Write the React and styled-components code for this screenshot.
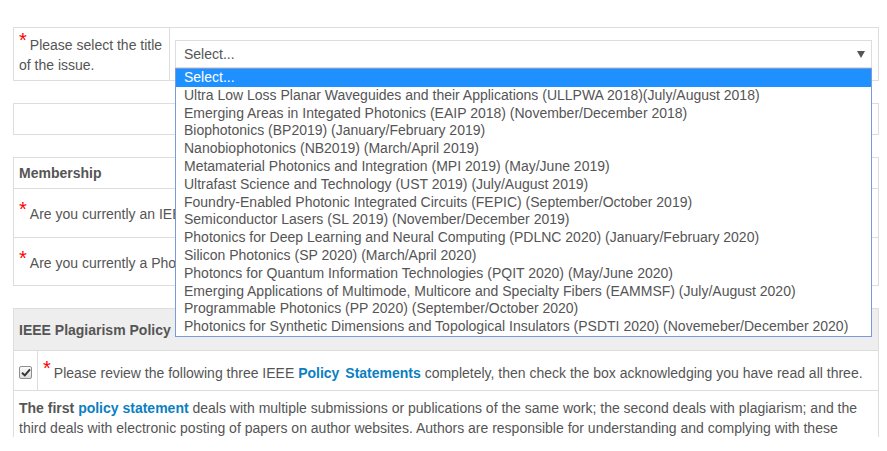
import React from "react";
import styled, { createGlobalStyle } from "styled-components";

const GlobalStyle = createGlobalStyle`
  html, body { margin: 0; padding: 0; background: #fff; }
  body {
    font-family: "Liberation Sans", Arial, sans-serif;
    font-size: 14px;
    color: #555;
  }
  * { box-sizing: border-box; }
`;

const Page = styled.div`
  width: 887px;
  height: 437px;
  overflow: hidden;
  padding: 27px 8px 0 13px;
  display: flex;
  flex-direction: column;
  gap: 22px;
`;

const Panel = styled.div`
  border: 1px solid #ddd;
  display: flex;
  flex-direction: column;
  flex-shrink: 0;
`;

const Row = styled.div`
  display: grid;
  grid-template-columns: ${(p) => p.$cols || "1fr"};
  border-top: ${(p) => (p.$first ? "none" : "1px solid #ddd")};
  background: ${(p) => (p.$shaded ? "#eee" : "#fff")};
  min-height: ${(p) => p.$h || 0}px;
`;

const Cell = styled.div`
  display: flex;
  align-items: center;
  padding: ${(p) => p.$pad || "5px"};
  line-height: 20px;
  border-right: ${(p) => (p.$divider ? "1px solid #ddd" : "none")};
`;

const Label = styled.div`
  line-height: 20px;
  padding-top: ${(p) => p.$drop || 2}px;
`;

const Req = styled.span`
  color: #f00;
  font-size: 20px;
  line-height: 10px;
  vertical-align: 3px;
  margin-right: 3px;
`;

const Heading = styled.div`
  font-weight: bold;
  color: #555;
`;

const SelectWrap = styled.div`
  position: relative;
  width: 697px;
`;

const SelectBox = styled.div`
  height: 28px;
  border: 1px solid #ddd;
  background: #fff;
  display: flex;
  align-items: center;
  justify-content: space-between;
  padding: 0 6px 0 8px;
  color: #555;
`;

const Caret = styled.span`
  width: 0;
  height: 0;
  border-left: 4px solid transparent;
  border-right: 4px solid transparent;
  border-top: 7px solid #555;
  margin-top: 1px;
`;

const OptionList = styled.ul`
  position: absolute;
  top: 28px;
  left: 0;
  width: 697px;
  margin: 0;
  padding: 0;
  list-style: none;
  background: #fff;
  border: 1px solid #7a9ad8;
  z-index: 10;
`;

const Option = styled.li`
  height: 17.8px;
  line-height: 17.8px;
  padding-left: 8px;
  white-space: nowrap;
  color: ${(p) => (p.$active ? "#fff" : "#555")};
  background: ${(p) => (p.$active ? "#1e90ff" : "transparent")};
`;

const Check = styled.span`
  display: inline-flex;
  align-items: center;
  justify-content: center;
  width: 13px;
  height: 13px;
  border: 1px solid #8f8f8f;
  border-radius: 2px;
  background: linear-gradient(#fbfbfb, #dcdcdc);
  margin-top: 4px;
`;

const Link = styled.a`
  color: #0b7fc1;
  font-weight: bold;
  text-decoration: none;
  word-spacing: ${(p) => (p.$wide ? "2px" : "normal")};
`;

const Strong = styled.b`
  color: #555;
`;

const Paragraph = styled.div`
  line-height: 20px;
  padding: 7px 5px 0 5px;
`;

const options = [
  "Select...",
  "Ultra Low Loss Planar Waveguides and their Applications (ULLPWA 2018)(July/August 2018)",
  "Emerging Areas in Integated Photonics (EAIP 2018) (November/December 2018)",
  "Biophotonics (BP2019) (January/February 2019)",
  "Nanobiophotonics (NB2019) (March/April 2019)",
  "Metamaterial Photonics and Integration (MPI 2019) (May/June 2019)",
  "Ultrafast Science and Technology (UST 2019) (July/August 2019)",
  "Foundry-Enabled Photonic Integrated Circuits (FEPIC) (September/October 2019)",
  "Semiconductor Lasers (SL 2019) (November/December 2019)",
  "Photonics for Deep Learning and Neural Computing (PDLNC 2020) (January/February 2020)",
  "Silicon Photonics (SP 2020) (March/April 2020)",
  "Photoncs for Quantum Information Technologies (PQIT 2020) (May/June 2020)",
  "Emerging Applications of Multimode, Multicore and Specialty Fibers (EAMMSF) (July/August 2020)",
  "Programmable Photonics (PP 2020) (September/October 2020)",
  "Photonics for Synthetic Dimensions and Topological Insulators (PSDTI 2020) (Novemeber/December 2020)",
];

export default function App() {
  return (
    <>
      <GlobalStyle />
      <Page>
        <Panel>
          <Row $first $cols="156px 1fr" $h={52}>
            <Cell $divider>
              <Label>
                <Req>*</Req>Please select the title of the issue.
              </Label>
            </Cell>
            <Cell $pad="0 6px 0 5px">
              <SelectWrap>
                <SelectBox>
                  <span>Select...</span>
                  <Caret />
                </SelectBox>
                <OptionList>
                  {options.map((o, i) => (
                    <Option key={i} $active={i === 0}>
                      {o}
                    </Option>
                  ))}
                </OptionList>
              </SelectWrap>
            </Cell>
          </Row>
        </Panel>

        <Panel>
          <Row $first $h={30} />
        </Panel>

        <Panel>
          <Row $first $h={30}>
            <Cell>
              <Heading>Membership</Heading>
            </Cell>
          </Row>
          <Row $h={49}>
            <Cell>
              <Label>
                <Req>*</Req>Are you currently an IEEE member?
              </Label>
            </Cell>
          </Row>
          <Row $h={48}>
            <Cell>
              <Label>
                <Req>*</Req>Are you currently a Photonics Society member?
              </Label>
            </Cell>
          </Row>
        </Panel>

        <Panel>
          <Row $first $shaded $h={41}>
            <Cell>
              <Heading>IEEE Plagiarism Policy</Heading>
            </Cell>
          </Row>
          <Row $cols="24px 1fr" $h={40}>
            <Cell $divider $pad="0 0 0 5px">
              <Check>
                <svg width="10" height="9" viewBox="0 0 10 9">
                  <path
                    d="M1 4.8 L3.8 7.4 L9 1.4"
                    fill="none"
                    stroke="#333"
                    strokeWidth="2"
                  />
                </svg>
              </Check>
            </Cell>
            <Cell>
              <Label $drop={4}>
                <Req>*</Req>Please review the following three IEEE{" "}
                <Link href="#" $wide>
                  Policy Statements
                </Link>{" "}
                completely, then check the box acknowledging you have read all
                three.
              </Label>
            </Cell>
          </Row>
          <Row $h={60}>
            <Paragraph>
              <Strong>The first</Strong> <Link href="#">policy statement</Link>{" "}
              deals with multiple submissions or publications of the same work;
              the second deals with plagiarism; and the third deals with
              electronic posting of papers on author websites. Authors are
              responsible for understanding and complying with these policies.
            </Paragraph>
          </Row>
        </Panel>
      </Page>
    </>
  );
}
